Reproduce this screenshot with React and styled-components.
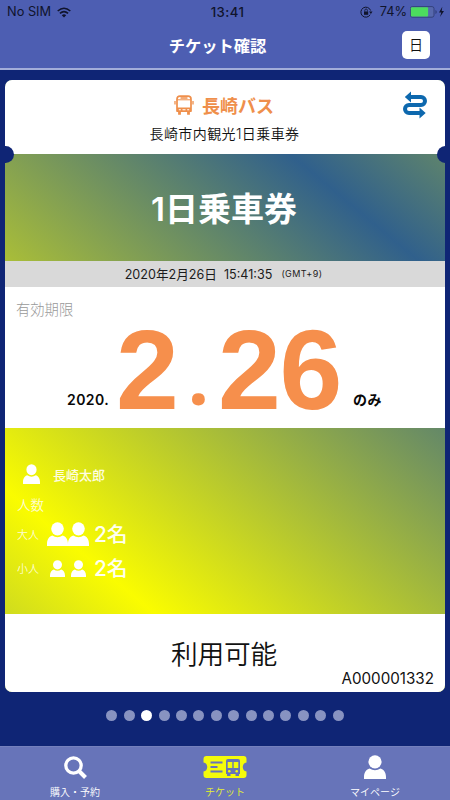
import React from "react";
import styled, { createGlobalStyle } from "styled-components";

const Global = createGlobalStyle`
  * { box-sizing: border-box; }
  body { margin: 0; font-family: Inter, "Noto Sans CJK JP", sans-serif; }
`;

const Screen = styled.div`
  width: 450px;
  height: 800px;
  overflow: hidden;
  display: flex;
  flex-direction: column;
  background: #0f2575;
`;

const Header = styled.header`
  height: 70px;
  flex: none;
  background: #4d5eb2;
  border-bottom: 2px solid #a3add9;
`;

const StatusBar = styled.div`
  height: 22px;
  display: grid;
  grid-template-columns: 1fr auto 1fr;
  align-items: center;
  padding: 1px 5px 0 7px;
  font-size: 12.8px;
  line-height: 22px;
  color: #10142c;
`;

const StatusGroup = styled.div`
  display: flex;
  align-items: center;
  justify-content: ${(p) => (p.$end ? "flex-end" : "flex-start")};
  gap: ${(p) => p.$gap}px;
`;

const Clock = styled.div`
  margin-left: 3px;
  font-size: 13.2px;
  font-weight: 500;
  letter-spacing: 0.4px;
`;

const TitleBar = styled.div`
  height: 46px;
  display: grid;
  grid-template-columns: 1fr auto 1fr;
  align-items: center;
  padding: 0 20px 0 4px;
`;

const Title = styled.h1`
  grid-column: 2;
  margin: 0 0 0 1px;
  font: 700 16.3px/24px "Noto Sans CJK JP", sans-serif;
  color: #fff;
`;

const LangButton = styled.button`
  justify-self: end;
  width: 28px;
  height: 28px;
  margin-top: -1px;
  padding: 0 0 1px;
  border: 0;
  border-radius: 5px;
  background: #fff;
  color: #111;
  font: 350 14px/27px "Noto Sans CJK JP", sans-serif;
`;

const Card = styled.main`
  position: relative;
  width: 440px;
  height: 612px;
  margin: 10px 5px 0;
  flex: none;
  display: flex;
  flex-direction: column;
  border-radius: 7px;
  overflow: hidden;
  background: linear-gradient(
    219.7deg,
    #79985a 0,
    #30608c 156px,
    #fafc00 596px,
    #b5c732 752px
  );
`;

const Notch = styled.span`
  position: absolute;
  top: 66px;
  ${(p) => p.$side}: -8.5px;
  width: 17px;
  height: 17px;
  border-radius: 50%;
  background: #0f2575;
`;

const CardHead = styled.section`
  height: 74px;
  flex: none;
  display: grid;
  grid-template-columns: 60px 1fr 60px;
  padding-top: 13px;
  background: #fff;
`;

const HeadCenter = styled.div`
  grid-column: 2;
  display: flex;
  flex-direction: column;
  align-items: center;
`;

const Operator = styled.div`
  height: 24px;
  display: flex;
  align-items: center;
  gap: 8px;
  padding-right: 2px;
  color: #ef8f4b;
  font: 700 18px/24px "Noto Sans CJK JP", sans-serif;
`;

const Product = styled.div`
  margin-top: 6px;
  padding-right: 1px;
  font: 350 14px/22px Inter, "Noto Sans CJK JP", sans-serif;
  letter-spacing: 0.4px;
  color: #111;
`;

const RouteIcon = styled.svg`
  width: 24px;
  height: 28px;
  margin: -2px 0 0 18px;
`;

const Banner = styled.section`
  height: 107px;
  flex: none;
  display: flex;
  align-items: center;
  justify-content: center;
  padding: 2px 2px 0 0;
  color: #fff;
  font: 600 33px/44px Inter, "Noto Sans CJK JP", sans-serif;
`;

const TimeStrip = styled.section`
  height: 26px;
  flex: none;
  display: flex;
  align-items: center;
  justify-content: center;
  padding: 0 3px 1px 0;
  background: #d9d9d9;
  color: #1b1b1b;
  font-size: 12.6px;
  font-weight: 370;
  white-space: pre;
`;

const Zone = styled.span`
  margin-left: 9px;
  font-size: 9px;
  letter-spacing: 0.4px;
`;

const Validity = styled.section`
  height: 141px;
  flex: none;
  display: flex;
  flex-direction: column;
  padding: 11px 0 0 11px;
  background: #fff;
`;

const ValidityLabel = styled.div`
  font: 300 14.3px/22px "Noto Sans CJK JP", sans-serif;
  color: #999;
`;

const DateLine = styled.div`
  height: 104px;
  display: flex;
  align-items: flex-end;
  padding-left: 51px;
`;

const Aside = styled.span`
  width: ${(p) => p.$w}px;
  margin-bottom: 14px;
  font: 600 14px/20px Inter, "Noto Sans CJK JP", sans-serif;
  letter-spacing: 0.45px;
  color: #080808;
`;

const BigDigits = styled.span`
  width: ${(p) => p.$w}px;
  margin-bottom: -6px;
  font: 700 113px/120px "Liberation Sans", sans-serif;
  letter-spacing: -1.3px;
  color: #f68f4c;
  white-space: nowrap;
`;

const BigDot = styled(BigDigits)`
  font-family: "Noto Sans", sans-serif;
  font-size: 74px;
  margin-bottom: -13px;
`;

const Holder = styled.section`
  height: 186px;
  flex: none;
  display: flex;
  flex-direction: column;
  padding: 33px 0 0 12px;
  color: #fff;
`;

const HolderRow = styled.div`
  height: ${(p) => p.$h}px;
  display: flex;
  align-items: center;
`;

const HolderName = styled.span`
  margin: 2px 0 0 13px;
  font: 500 13px/20px "Noto Sans CJK JP", sans-serif;
  color: #fffde0;
`;

const Small = styled.span`
  width: 30px;
  font: 350 ${(p) => p.$size}px/18px "Noto Sans CJK JP", sans-serif;
  color: #fffdd0;
`;

const Count = styled.span`
  margin: 1px 0 0 ${(p) => p.$ml}px;
  font: 500 20.8px/28px Inter, "Noto Sans CJK JP", sans-serif;
  color: #fffff0;
`;

const PersonSvg = styled.svg`
  width: ${(p) => p.$w}px;
  height: ${(p) => p.$h}px;
  margin-left: ${(p) => p.$ml || 0}px;
  fill: #fff;
  flex: none;
`;

const Usable = styled.section`
  flex: 1;
  display: flex;
  flex-direction: column;
  align-items: center;
  padding: 19px 11px 0 9px;
  background: #fff;
  color: #111;
`;

const UsableText = styled.div`
  font: 350 26.7px/40px "Noto Sans CJK JP", sans-serif;
  letter-spacing: -0.2px;
`;

const Serial = styled.div`
  align-self: flex-end;
  margin-top: -4px;
  font-size: 15.200px;
  font-weight: 380;
  line-height: 20px;
`;

const Dots = styled.div`
  height: 54px;
  flex: none;
  display: flex;
  justify-content: center;
  gap: 6.4px;
  padding-top: 17.5px;
`;

const Dot = styled.span`
  width: 11px;
  height: 11px;
  border-radius: 50%;
  background: ${(p) => (p.$on ? "#fff" : "#8893c1")};
`;

const TabBar = styled.nav`
  height: 54px;
  flex: none;
  display: grid;
  grid-template-columns: repeat(3, 1fr);
  background: #6774b9;
  border-top: 1px solid #7480bd;
`;

const Tab = styled.div`
  display: flex;
  flex-direction: column;
  align-items: center;
  padding-top: 8px;
  color: ${(p) => (p.$on ? "#e6f22c" : "#fff")};
  font: 350 10px/16px "Noto Sans CJK JP", sans-serif;
  svg { height: 24px; display: block; margin-bottom: 5px; }
`;

function Person({ w, h, ml }) {
  return (
    <PersonSvg $w={w} $h={h} $ml={ml} viewBox="0 0 22 24" preserveAspectRatio="none">
      <ellipse cx="11" cy="6.800" rx="6.600" ry="6.600" />
      <path d="M0 24v-2c0-5 2.500-7.500 5.500-8.500q5.500 3.500 11 0c3 1 5.500 3.500 5.500 8.500v2z" />
    </PersonSvg>
  );
}

function Bus() {
  return (
    <svg width="20" height="20" viewBox="0 0 20 20" fill="none" stroke="#ef8f4b">
      <path d="M3 16V4q0-2.800 3-2.800h8q3 0 3 2.800v12z" strokeWidth="1.700" />
      <path d="M6.500 3h7M1 6v3.500M19 6v3.500" strokeWidth="1.300" />
      <path d="M3 4.800h14" strokeWidth="1" />
      <path d="M3 12.500h14V17H3z" fill="#ef8f4b" stroke="none" />
      <path d="M5.500 16v3.800M14.500 16v3.800" strokeWidth="2.800" />
      <path d="M4.800 14.700h2M13.200 14.700h2M8.500 14.700h3" stroke="#fff" strokeWidth="1.100" />
    </svg>
  );
}

export default function App() {
  return (
    <Screen>
      <Global />
      <Header>
        <StatusBar>
          <StatusGroup $gap={6}>
            <span>No SIM</span>
            <svg width="14" height="11" viewBox="0 0 14 11" fill="none" stroke="#10142c">
              <path d="M.7 4Q7-1.500 13.300 4M2.900 6.300q4.100-3.500 8.200 0" strokeWidth="1.600" />
              <path d="M4.800 8.200Q7 6.500 9.200 8.200L7 10.500z" fill="#10142c" stroke="none" />
            </svg>
          </StatusGroup>
          <Clock>13:41</Clock>
          <StatusGroup $end $gap={3}>
            <svg width="13" height="12" viewBox="0 0 13 12" fill="none" stroke="#10142c">
              <path d="M10.200 8.700A5 5 0 1 1 10.600 4.500" strokeWidth="1" />
              <path d="M9 5.500h3.500L10.900 8z" fill="#10142c" stroke="none" />
              <path d="M4 5.500h4.200v3.300H4z" fill="#10142c" stroke="none" />
              <path d="M4.800 5.600V4.300a1.300 1.300 0 0 1 2.600 0v1.300" strokeWidth=".8" />
            </svg>
            <span>&nbsp;74%</span>
            <svg width="35" height="12" viewBox="1 0 35 12">
              <rect x="1.400" y=".6" width="23.600" height="10.600" rx="2" fill="#5768ad" stroke="#2c3970" strokeWidth=".8" />
              <rect x="1.900" y="1.200" width="17.200" height="9.400" rx="1" fill="#4cdc5e" />
              <path d="M26.500 4v4q1.200-.5 1.200-2t-1.200-2z" fill="#2c3970" />
              <path d="M33.300.8 30 6.500h2.300L31 11l4-6h-2.300z" fill="#10142c" />
            </svg>
          </StatusGroup>
        </StatusBar>
        <TitleBar>
          <Title>チケット確認</Title>
          <LangButton>日</LangButton>
        </TitleBar>
      </Header>

      <Card>
        <CardHead>
          <HeadCenter>
            <Operator>
              <Bus />
              <span>長崎バス</span>
            </Operator>
            <Product>長崎市内観光1日乗車券</Product>
          </HeadCenter>
          <RouteIcon viewBox="0 0 24 28">
            <path d="M6 6h12a4 4 0 0 1 0 8H6a4 4 0 0 0 0 8h12" fill="none" stroke="#0d68ae" strokeWidth="4" />
            <path d="M1.800 6 8 .5v11zM22.700 22l-6.200 5.500v-11z" fill="#0d68ae" />
          </RouteIcon>
        </CardHead>
        <Banner>1日乗車券</Banner>
        <TimeStrip>
          2020年2月26日{"  "}15:41:35
          <Zone>(GMT+9)</Zone>
        </TimeStrip>
        <Validity>
          <ValidityLabel>有効期限</ValidityLabel>
          <DateLine>
            <Aside $w={49}>2020.</Aside>
            <BigDigits $w={72}>2</BigDigits>
            <BigDot $w={30}>.</BigDot>
            <BigDigits $w={135}>26</BigDigits>
            <Aside>のみ</Aside>
          </DateLine>
        </Validity>
        <Holder>
          <HolderRow $h={26}>
            <Person w={17} h={20} ml={6} />
            <HolderName>長崎太郎</HolderName>
          </HolderRow>
          <HolderRow $h={33}>
            <Small $size={13.5}>人数</Small>
          </HolderRow>
          <HolderRow $h={28}>
            <Small $size={11}>大人</Small>
            <Person w={21} h={24} />
            <Person w={21} h={24} />
            <Count $ml={5}>2名</Count>
          </HolderRow>
          <HolderRow $h={40}>
            <Small $size={11}>小人</Small>
            <Person w={15} h={17} ml={2.5} />
            <Person w={15} h={17} ml={6} />
            <Count $ml={8.5}>2名</Count>
          </HolderRow>
        </Holder>
        <Usable>
          <UsableText>利用可能</UsableText>
          <Serial>A000001332</Serial>
        </Usable>
        <Notch $side="left" />
        <Notch $side="right" />
      </Card>

      <Dots>
        {Array.from({ length: 14 }, (_, i) => (
          <Dot key={i} $on={i === 2} />
        ))}
      </Dots>

      <TabBar>
        <Tab>
          <svg width="24" viewBox="0 0 24 24" fill="none" stroke="#fff">
            <circle cx="10.500" cy="10.500" r="7.700" strokeWidth="3.300" />
            <path d="m15.500 15.500 7 7" strokeWidth="4" />
          </svg>
          購入・予約
        </Tab>
        <Tab $on>
          <svg width="44" viewBox="0 0 44 24">
            <path d="M3.500 1h37q3 0 3 3v3.500c-5 .5-5 8.500 0 9V20q0 3-3 3h-37q-3 0-3-3v-3.500c5-.5 5-8.500 0-9V4q0-3 3-3z" fill="#f4fb0a" />
            <path d="M7.500 7.500h12M7.500 12h7M7.500 16.500h12" stroke="#6774b9" strokeWidth="2.200" />
            <path d="M23 19V6q0-2 2-2h10q2 0 2 2v13h-1v2h-3.500v-2h-5v2H24v-2z" fill="#6774b9" />
            <path d="M24.700 7h4.600v6h-4.600zM30.700 7h4.600v6h-4.600z" fill="#f4fb0a" />
            <circle cx="26.300" cy="16.300" r="1.300" fill="#f4fb0a" />
            <circle cx="33.700" cy="16.300" r="1.300" fill="#f4fb0a" />
          </svg>
          チケット
        </Tab>
        <Tab>
          <Person w={22} h={24} />
          マイページ
        </Tab>
      </TabBar>
    </Screen>
  );
}
